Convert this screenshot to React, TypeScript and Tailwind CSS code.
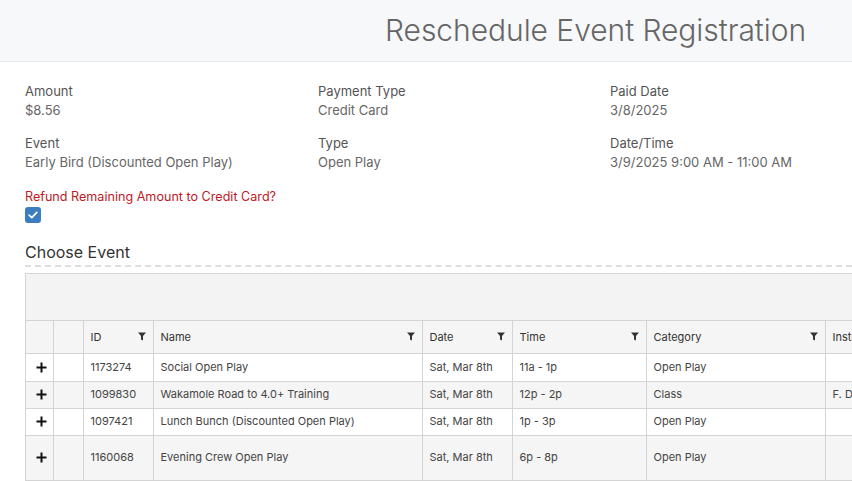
const rows = [
  { id: "1173274", name: "Social Open Play", date: "Sat, Mar 8th", time: "11a - 1p", cat: "Open Play", inst: "", h: "h-[28px]", bg: "bg-white" },
  { id: "1099830", name: "Wakamole Road to 4.0+ Training", date: "Sat, Mar 8th", time: "12p - 2p", cat: "Class", inst: "F. D", h: "h-[27px]", bg: "bg-[#f5f5f5]" },
  { id: "1097421", name: "Lunch Bunch (Discounted Open Play)", date: "Sat, Mar 8th", time: "1p - 3p", cat: "Open Play", inst: "", h: "h-[27px]", bg: "bg-white" },
  { id: "1160068", name: "Evening Crew Open Play", date: "Sat, Mar 8th", time: "6p - 8p", cat: "Open Play", inst: "", h: "h-[45px]", bg: "bg-[#f5f5f5]" },
];

const Funnel = () => (
  <svg width="8" height="9" viewBox="0 0 8 9" className="shrink-0">
    <path d="M0 0.5h8L5 4v4.5L3 7.5V4z" fill="#333" />
  </svg>
);

const Plus = () => (
  <svg width="11" height="11" viewBox="0 0 11 11" className="ml-[10px]">
    <path d="M5.5 0.5v10M0.5 5.5h10" stroke="#111" strokeWidth="2" />
  </svg>
);

const Info = ({ label, value }: { label: string; value: string }) => (
  <div className="flex flex-col leading-[19px]">
    <span className="text-[13px] text-[#555]">{label}</span>
    <span className="text-[13px] text-[#666]">{value}</span>
  </div>
);

const HeadCell = ({ label, w, filter = true }: { label: string; w: string; filter?: boolean }) => (
  <th className={`${w} border-l border-[#d4d4d4] px-[7px] font-normal text-left`}>
    <div className="flex items-center justify-between">
      <span>{label}</span>
      {filter && <Funnel />}
    </div>
  </th>
);

export default function App() {
  return (
    <div className="w-[852px] h-[481px] overflow-hidden bg-white font-['Inter',sans-serif]">
      <div className="h-[62px] bg-[#f7f8fa] border-b border-[#e6e8eb] flex items-center justify-end pr-[46px]">
        <h1 className="text-[30px] font-light text-[#666] tracking-[-0.05px]">Reschedule Event Registration</h1>
      </div>

      <div className="pl-[25px] pt-[20px]">
        <div className="grid grid-cols-[293px_292px_293px] gap-y-[14px] w-[900px]">
          <Info label="Amount" value="$8.56" />
          <Info label="Payment Type" value="Credit Card" />
          <Info label="Paid Date" value="3/8/2025" />
          <Info label="Event" value="Early Bird (Discounted Open Play)" />
          <Info label="Type" value="Open Play" />
          <Info label="Date/Time" value="3/9/2025 9:00 AM - 11:00 AM" />
        </div>

        <div className="mt-[15px] text-[12.6px] leading-[19px] text-[#c0181f]">Refund Remaining Amount to Credit Card?</div>
        <div className="mt-[1px] w-[16px] h-[16px] rounded-[3px] bg-[#3b7dbf] flex items-center justify-center">
          <svg width="10" height="8" viewBox="0 0 10 8">
            <path d="M1.2 4.2L3.8 6.6L8.8 1.4" fill="none" stroke="#fff" strokeWidth="1.8" strokeLinecap="round" strokeLinejoin="round" />
          </svg>
        </div>

        <div className="mt-[17px] text-[16px] text-[#333] pb-[1px] border-b-2 border-dashed border-[#dedede]">Choose Event</div>

        <div className="mt-[6px] border border-[#d4d4d4] w-[900px] text-[11px] text-[#444]">
          <div className="h-[47px] bg-[#f3f3f3] border-b border-[#d4d4d4]" />
          <table className="table-fixed border-collapse w-[900px]">
            <thead>
              <tr className="h-[32px] bg-[#f5f5f5] text-[#333]">
                <th className="w-[27px]" />
                <th className="w-[30px] border-l border-[#d4d4d4]" />
                <HeadCell label="ID" w="w-[70px]" />
                <HeadCell label="Name" w="w-[269px]" />
                <HeadCell label="Date" w="w-[90px]" />
                <HeadCell label="Time" w="w-[134px]" />
                <HeadCell label="Category" w="w-[179px]" />
                <HeadCell label="Instructor" w="w-[101px]" filter={false} />
              </tr>
            </thead>
            <tbody>
              {rows.map((r) => (
                <tr key={r.id} className={`${r.h} ${r.bg} border-t border-[#d4d4d4]`}>
                  <td><Plus /></td>
                  <td className="border-l border-[#d4d4d4]" />
                  <td className="border-l border-[#d4d4d4] px-[7px]">{r.id}</td>
                  <td className="border-l border-[#d4d4d4] px-[7px]">{r.name}</td>
                  <td className="border-l border-[#d4d4d4] px-[7px]">{r.date}</td>
                  <td className="border-l border-[#d4d4d4] px-[7px]">{r.time}</td>
                  <td className="border-l border-[#d4d4d4] px-[7px]">{r.cat}</td>
                  <td className="border-l border-[#d4d4d4] px-[7px]">{r.inst}</td>
                </tr>
              ))}
              <tr className="h-[28px] border-t border-[#d4d4d4]">
                <td /><td className="border-l border-[#d4d4d4]" /><td className="border-l border-[#d4d4d4]" /><td className="border-l border-[#d4d4d4]" />
                <td className="border-l border-[#d4d4d4]" /><td className="border-l border-[#d4d4d4]" /><td className="border-l border-[#d4d4d4]" /><td className="border-l border-[#d4d4d4]" />
              </tr>
            </tbody>
          </table>
        </div>
      </div>
    </div>
  );
}
